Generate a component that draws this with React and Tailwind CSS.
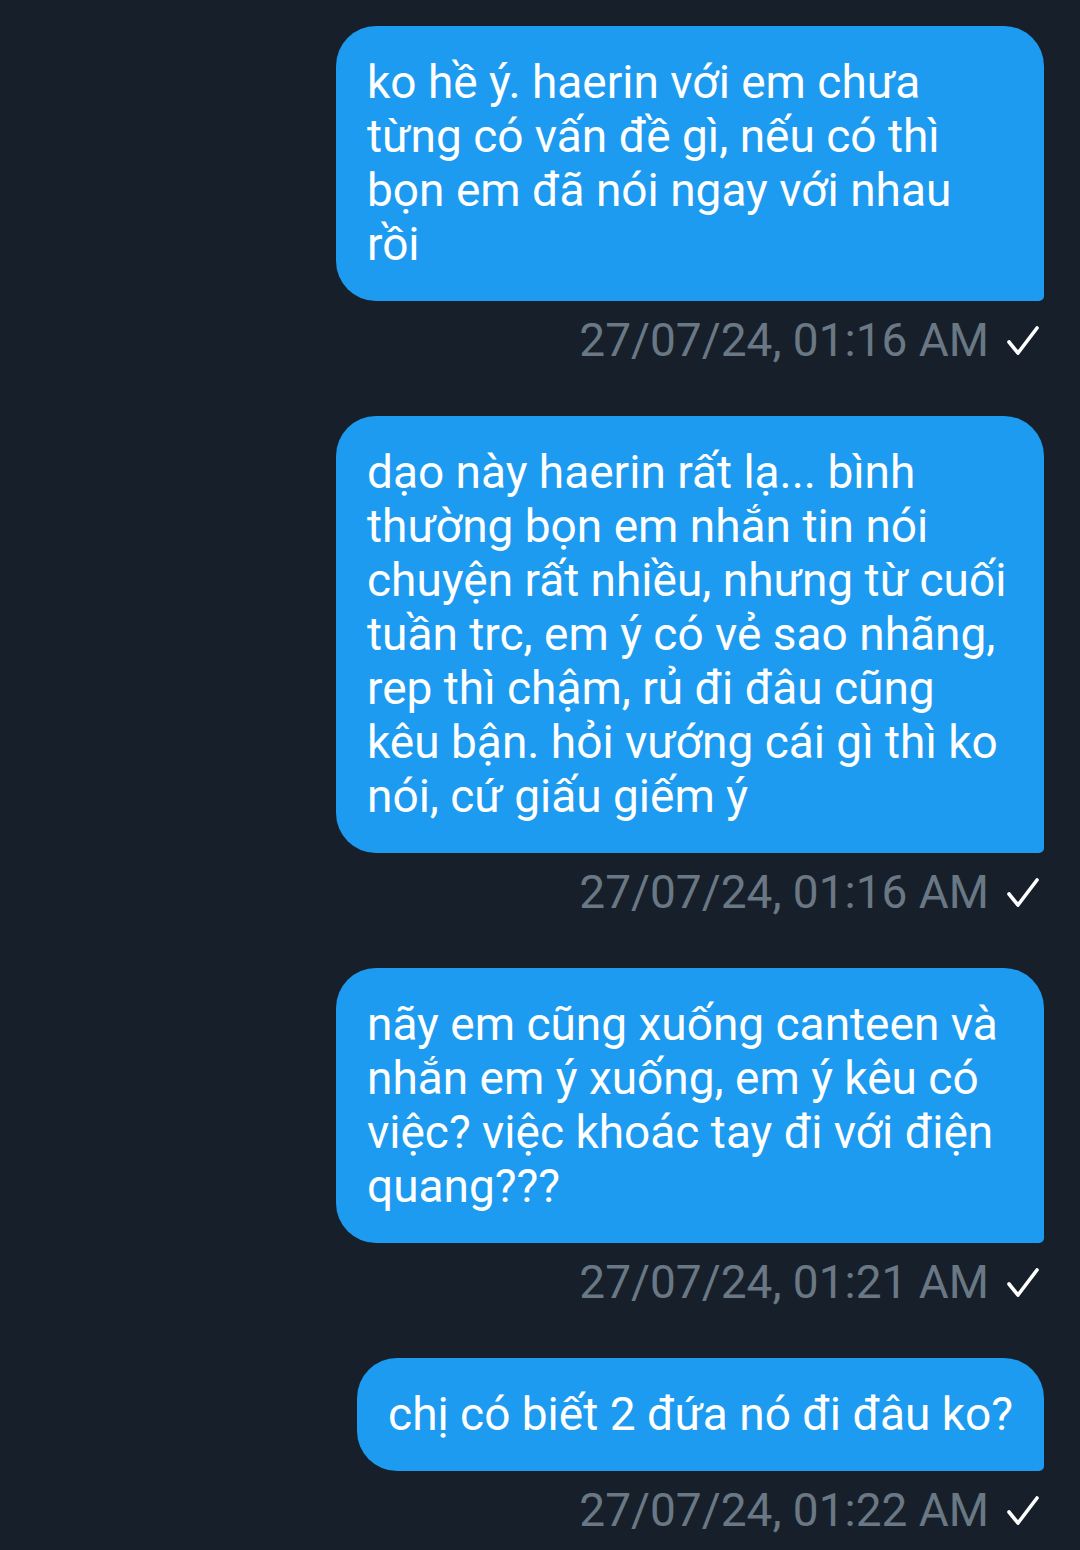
const messages = [
    {
        text: 'ko hề ý. haerin với em chưa từng có vấn đề gì, nếu có thì bọn em đã nói ngay với nhau rồi',
        time: '27/07/24, 01:16 AM',
    },
    {
        text: 'dạo này haerin rất lạ... bình thường bọn em nhắn tin nói chuyện rất nhiều, nhưng từ cuối tuần trc, em ý có vẻ sao nhãng, rep thì chậm, rủ đi đâu cũng kêu bận. hỏi vướng cái gì thì ko nói, cứ giấu giếm ý',
        time: '27/07/24, 01:16 AM',
    },
    {
        text: 'nãy em cũng xuống canteen và nhắn em ý xuống, em ý kêu có việc? việc khoác tay đi với điện quang???',
        time: '27/07/24, 01:21 AM',
    },
    {
        text: 'chị có biết 2 đứa nó đi đâu ko?',
        time: '27/07/24, 01:22 AM',
    },
];

const Check = () => (
    <svg width="34" height="34" viewBox="0 0 34 34" className="ml-[17px]">
        <polyline points="3,19 12,30 31,5" fill="none" stroke="#ffffff" strokeWidth="3.6" strokeLinecap="round" strokeLinejoin="round" />
    </svg>
);

const App = () => {
    return (
        <div className="min-h-[1550px] bg-[#17202a] pt-[26px] pr-[36px] font-['Roboto',_'Noto_Sans',_sans-serif]">
            <div className="flex flex-col items-end">
                {messages.map((m, i) => (
                    <div key={i} className="mb-[49px] flex flex-col items-end">
                        <div className="max-w-[708px] rounded-[40px] rounded-br-[5px] bg-[#1d9bf0] px-[31px] pt-[29px] pb-[30px] text-[46px] leading-[54px] text-white">
                            {m.text}
                        </div>
                        <div className="mt-[12px] flex items-center pr-[4px] text-[46px] leading-[54px] text-[#6a7886]">
                            <span>{m.time}</span>
                            <Check />
                        </div>
                    </div>
                ))}
            </div>
        </div>
    );
};

export default App;
